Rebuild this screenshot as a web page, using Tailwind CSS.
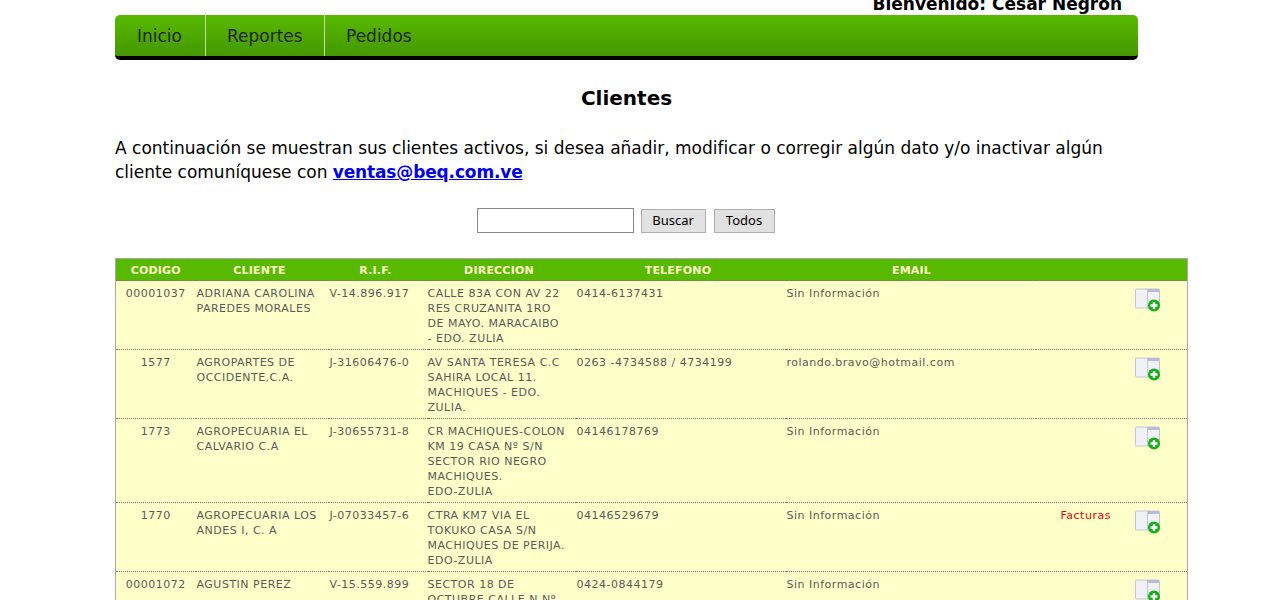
<!DOCTYPE html>
<html lang="es">
<head>
    <meta charset="UTF-8">
    <meta name="viewport" content="width=device-width, initial-scale=1.0">
    <title>Clientes</title>
    <script src="https://cdn.jsdelivr.net/npm/@tailwindcss/browser@4"></script>
</head>
<body class="h-[600px] overflow-hidden bg-white font-['DejaVu_Sans',Verdana,sans-serif] text-black">
    <svg class="hidden">
        <symbol id="add" viewBox="0 0 26 26">
            <rect x="0.5" y="1" width="24" height="19" rx="1" fill="#f1f1f8" stroke="#c4c4d4"/>
            <rect x="13" y="1" width="11" height="3" fill="#b9b9dc"/>
            <line x1="12.5" y1="1" x2="12.5" y2="20" stroke="#c4c4d4"/>
            <circle cx="19" cy="17.5" r="6" fill="#12b012"/>
            <path d="M19 14v7M15.5 17.5h7" stroke="#fff" stroke-width="2.4"/>
        </symbol>
    </svg>
    <div class="ml-[115px] w-[1073px]">
        <div class="h-[15px] w-[1007px] text-right text-[17px] leading-[8px] font-bold">Bienvenido: César Negrón</div>
        <ul class="flex h-[45px] w-[1023px] rounded-[5px] border-b-4 border-black bg-gradient-to-b from-[#58ba00] to-[#449800] text-[17px] text-[#1c2a00] [text-shadow:1px_1px_1px_#5c9a30]">
            <li class="flex h-full w-[91px] items-center border-r border-[#c5dca8] pt-[2px] pl-[22px]">Inicio</li>
            <li class="flex h-full w-[119px] items-center border-r border-[#c5dca8] pt-[2px] pl-[21px]">Reportes</li>
            <li class="flex h-full items-center pt-[2px] pl-[21px]">Pedidos</li>
        </ul>
        <div class="w-[1023px]">
            <h1 class="mt-[24px] text-center text-[20px] leading-[28px] font-bold">Clientes</h1>
            <p class="mt-[24px] text-[17px] leading-[24px]">A continuación se muestran sus clientes activos, si desea añadir, modificar o corregir algún dato y/o inactivar algún cliente comuníquese con <a href="#" class="font-bold tracking-[-0.15px] text-[#0000ee] underline">ventas@beq.com.ve</a></p>
            <form class="mt-[24px] flex h-[25px] items-center justify-center gap-[7px] pr-[2px] font-['Noto_Sans',sans-serif] text-[13px]">
                <input type="text" class="h-[25px] w-[157px] border border-[#8a8a8a] bg-white">
                <button class="h-[24px] w-[65px] border border-[#adadad] bg-[#e1e1e1]">Buscar</button>
                <button class="ml-[1px] h-[24px] w-[61px] border border-[#adadad] bg-[#e1e1e1]">Todos</button>
            </form>
        </div>
        <table class="mt-[25px] w-[1073px] table-fixed border-collapse border-x border-t border-[#a9a9a9] bg-[#ffffc9] text-[11px] leading-[15px] tracking-[0.5px] text-[#5a5a5a]">
            <thead>
                <tr class="h-[22px] bg-[#58ba00] tracking-[0.2px] text-[#ffffc9] [&>th]:pt-[2px]">
                    <th class="w-[80px] font-bold">CODIGO</th>
                    <th class="w-[133px] pr-[5px] text-center font-bold">CLIENTE</th>
                    <th class="w-[99px] pr-[5px] text-center font-bold">R.I.F.</th>
                    <th class="w-[148px] pr-[5px] text-center font-bold">DIRECCION</th>
                    <th class="w-[210px] pr-[5px] text-center font-bold">TELEFONO</th>
                    <th class="w-[250px] pl-[2px] text-center font-bold">EMAIL</th>
                    <th></th>
                </tr>
            </thead>
            <tbody class="align-top [&>tr>td]:pt-[5px] [&>tr>td]:pb-[3px]">
                <tr class="border-t border-dotted border-[#777]">
                    <td class="text-center">00001037</td>
                    <td class="pl-[1px]">ADRIANA CAROLINA PAREDES MORALES</td>
                    <td class="pl-[1px]">V-14.896.917</td>
                    <td class="pr-[9px]">CALLE 83A CON AV 22 RES CRUZANITA 1RO DE MAYO. MARACAIBO - EDO. ZULIA</td>
                    <td class="pl-[1px]">0414-6137431</td>
                    <td class="pl-[1px]">Sin Información</td>
                    <td><div class="mt-[2px] flex justify-end pr-[26px]"><svg class="h-[26px] w-[26px]"><use href="#add"/></svg></div></td>
                </tr>
                <tr class="border-t border-dotted border-[#777]">
                    <td class="text-center">1577</td>
                    <td class="pl-[1px]">AGROPARTES DE OCCIDENTE,C.A.</td>
                    <td class="pl-[1px]">J-31606476-0</td>
                    <td class="pr-[9px]">AV SANTA TERESA C.C SAHIRA LOCAL 11. MACHIQUES - EDO. ZULIA.</td>
                    <td class="pl-[1px]">0263 -4734588 / 4734199</td>
                    <td class="pl-[1px]">rolando.bravo@hotmail.com</td>
                    <td><div class="mt-[2px] flex justify-end pr-[26px]"><svg class="h-[26px] w-[26px]"><use href="#add"/></svg></div></td>
                </tr>
                <tr class="border-t border-dotted border-[#777]">
                    <td class="text-center">1773</td>
                    <td class="pl-[1px]">AGROPECUARIA EL CALVARIO C.A</td>
                    <td class="pl-[1px]">J-30655731-8</td>
                    <td class="pr-[9px]">CR MACHIQUES-COLON KM 19 CASA Nº S/N SECTOR RIO NEGRO MACHIQUES.<br>EDO-ZULIA</td>
                    <td class="pl-[1px]">04146178769</td>
                    <td class="pl-[1px]">Sin Información</td>
                    <td><div class="mt-[2px] flex justify-end pr-[26px]"><svg class="h-[26px] w-[26px]"><use href="#add"/></svg></div></td>
                </tr>
                <tr class="border-t border-dotted border-[#777]">
                    <td class="text-center">1770</td>
                    <td class="pl-[1px]">AGROPECUARIA LOS ANDES I, C. A</td>
                    <td class="pl-[1px]">J-07033457-6</td>
                    <td class="pr-[9px]">CTRA KM7 VIA EL TOKUKO CASA S/N MACHIQUES DE PERIJA.<br>EDO-ZULIA</td>
                    <td class="pl-[1px]">04146529679</td>
                    <td class="pl-[1px]">Sin Información</td>
                    <td><div class="flex items-start justify-between pr-[26px] pl-[25px]"><span class="text-[#f00000]">Facturas</span><svg class="mt-[2px] h-[26px] w-[26px]"><use href="#add"/></svg></div></td>
                </tr>
                <tr class="border-t border-dotted border-[#777]">
                    <td class="text-center">00001072</td>
                    <td class="pl-[1px]">AGUSTIN PEREZ</td>
                    <td class="pl-[1px]">V-15.559.899</td>
                    <td class="pr-[9px]">SECTOR 18 DE OCTUBRE CALLE N Nº</td>
                    <td class="pl-[1px]">0424-0844179</td>
                    <td class="pl-[1px]">Sin Información</td>
                    <td><div class="mt-[2px] flex justify-end pr-[26px]"><svg class="h-[26px] w-[26px]"><use href="#add"/></svg></div></td>
                </tr>
            </tbody>
        </table>
    </div>
</body>
</html>
